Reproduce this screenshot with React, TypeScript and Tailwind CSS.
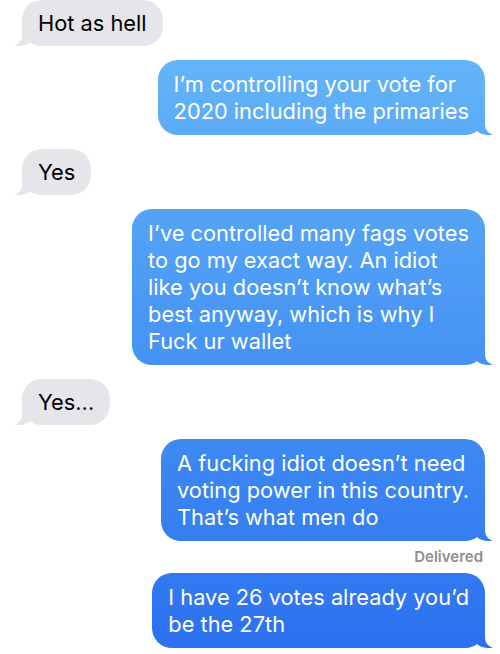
import React from "react";

type Msg = { id: number; fromMe: boolean; lines: string[] };

const messages: Msg[] = [
  { id: 1, fromMe: false, lines: ["Hot as hell"] },
  {
    id: 2,
    fromMe: true,
    lines: ["I’m controlling your vote for", "2020 including the primaries"],
  },
  { id: 3, fromMe: false, lines: ["Yes"] },
  {
    id: 4,
    fromMe: true,
    lines: [
      "I’ve controlled many fags votes",
      "to go my exact way. An idiot",
      "like you doesn’t know what’s",
      "best anyway, which is why I",
      "Fuck ur wallet",
    ],
  },
  { id: 5, fromMe: false, lines: ["Yes..."] },
];

const tailGroup: Msg[] = [
  {
    id: 6,
    fromMe: true,
    lines: [
      "A fucking idiot doesn’t need",
      "voting power in this country.",
      "That’s what men do",
    ],
  },
  {
    id: 7,
    fromMe: true,
    lines: ["I have 26 votes already you’d", "be the 27th"],
  },
];

const Bubble: React.FC<{ msg: Msg }> = ({ msg }) => {
  if (msg.fromMe) {
    return (
      <div className="flex justify-end pr-[15px]">
        <div className="relative rounded-[20px] bg-linear-to-b from-[#6abaf8] to-[#2b70ef] bg-fixed px-[16px] py-[10.5px] text-white">
          {msg.lines.map((l, i) => (
            <div key={i} className="whitespace-nowrap">
              {l}
            </div>
          ))}
          {/* хвостик */}
          <div className="absolute bottom-0 right-[-7px] h-[20px] w-[20px] rounded-bl-[15px] bg-linear-to-b from-[#6abaf8] to-[#2b70ef] bg-fixed" />
          <div className="absolute bottom-0 right-[-10px] h-[20px] w-[10px] rounded-bl-[10px] bg-white" />
        </div>
      </div>
    );
  }
  return (
    <div className="flex justify-start pl-[22px]">
      <div className="relative rounded-[20px] bg-[#e5e5ea] px-[16px] py-[9.5px] text-black">
        {msg.lines.map((l, i) => (
          <div key={i} className="whitespace-nowrap">
            {l}
          </div>
        ))}
        <div className="absolute bottom-0 left-[-7px] h-[20px] w-[20px] rounded-br-[15px] bg-[#e5e5ea]" />
        <div className="absolute bottom-0 left-[-26px] h-[20px] w-[26px] rounded-br-[10px] bg-white" />
      </div>
    </div>
  );
};

export default function App() {
  return (
    <div
      className="flex h-[654px] w-[500px] flex-col gap-[14px] overflow-hidden bg-white text-[21.8px] leading-[27px]"
      style={{ fontFamily: "Inter, 'Liberation Sans', sans-serif" }}
    >
      {messages.map((m) => (
        <Bubble key={m.id} msg={m} />
      ))}
      <div className="flex flex-col gap-[8px]">
        <Bubble msg={tailGroup[0]} />
        <div className="pr-[17px] text-right text-[15px] font-semibold leading-[16px] text-[#8e8e93]">
          Delivered
        </div>
        <Bubble msg={tailGroup[1]} />
      </div>
    </div>
  );
}
